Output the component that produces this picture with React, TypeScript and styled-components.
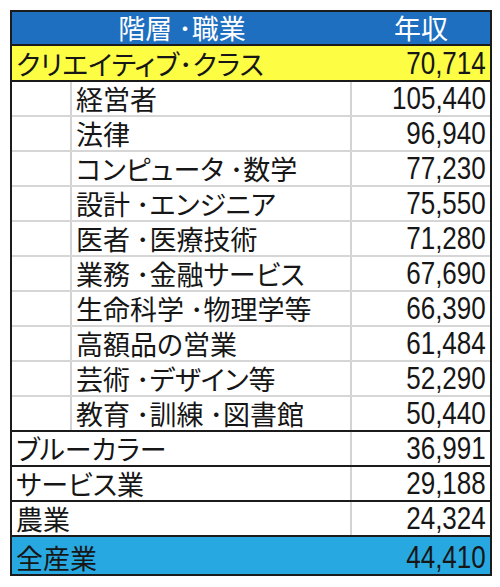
import React from "react";
import styled, { createGlobalStyle } from "styled-components";

const Global = createGlobalStyle`
  html, body { margin: 0; padding: 0; background: #ffffff; }
  body { font-family: "Noto Sans CJK JP", "Noto Sans", sans-serif; color: #161616; }
`;

const JP = `"Noto Sans CJK JP", "Noto Sans", sans-serif`;
const NUM = `"Liberation Sans", Arial, sans-serif`;

const Page = styled.div`
  padding: 10px 8px 10px 10px;
`;

const Sheet = styled.div`
  width: 482px;
  box-sizing: border-box;
  border: 2px solid #1b1b1b;
  display: flex;
  flex-direction: column;
`;

const HeaderRow = styled.div`
  display: grid;
  grid-template-columns: 340px 1fr;
  height: 32px;
  background: #1f6fc0;
  color: #ffffff;
  border-bottom: 2px solid #1b1b1b;
  font-family: ${JP};
  font-size: 27px;
  line-height: 32px;
`;

const HeaderCell = styled.div`
  text-align: center;
  white-space: pre;
`;

type Tone = "plain" | "yellow" | "blue";

const bg = (t: Tone) => (t === "yellow" ? "#fdfd44" : t === "blue" ? "#28a8e0" : "#ffffff");

const Row = styled.div<{ $tone: Tone; $h: number; $line: "dark" | "light" | "none"; $split: boolean }>`
  display: grid;
  grid-template-columns: 340px 1fr;
  height: ${(p) => p.$h}px;
  background: ${(p) => bg(p.$tone)};
  border-bottom: ${(p) =>
    p.$line === "dark" ? "2px solid #1b1b1b" : p.$line === "light" ? "2px solid #d6d6d6" : "none"};
  & > *:first-child {
    border-right: ${(p) => (p.$split ? "2px solid #d3d3d3" : "none")};
  }
`;

const LabelCell = styled.div`
  display: flex;
  align-items: flex-end;
  padding-left: 4px;
  padding-bottom: 1px;
  font-family: ${JP};
  font-size: 27px;
  line-height: 30px;
  font-feature-settings: "palt";
  white-space: pre;
  box-sizing: border-box;
`;

const SubLabelCell = styled.div`
  display: grid;
  grid-template-columns: 60px 1fr;
  box-sizing: border-box;
`;

const Indent = styled.div`
  border-right: 2px solid #d3d3d3;
`;

const SubText = styled.div`
  display: flex;
  align-items: flex-end;
  padding-left: 4px;
  padding-bottom: 1px;
  font-family: ${JP};
  font-size: 27px;
  line-height: 30px;
  font-feature-settings: "palt";
  white-space: pre;
`;

const ValueCell = styled.div`
  display: flex;
  align-items: flex-end;
  justify-content: flex-end;
  padding-right: 4px;
  padding-bottom: 1px;
  font-family: ${NUM};
  font-size: 31px;
  line-height: 30px;
`;

const Num = styled.span`
  display: inline-block;
  transform: scaleX(0.84);
  transform-origin: right bottom;
`;

const subs: [string, string][] = [
  ["経営者", "105,440"],
  ["法律", "96,940"],
  ["コンピュータ ･数学", "77,230"],
  ["設計 ･エンジニア", "75,550"],
  ["医者 ･医療技術", "71,280"],
  ["業務 ･金融サービス", "67,690"],
  ["生命科学 ･物理学等", "66,390"],
  ["高額品の営業", "61,484"],
  ["芸術 ･デザイン等", "52,290"],
  ["教育 ･訓練 ･図書館", "50,440"],
];

const tops: [string, string][] = [
  ["ブルーカラー", "36,991"],
  ["サービス業", "29,188"],
  ["農業", "24,324"],
];

export default function App() {
  return (
    <Page>
      <Global />
      <Sheet>
        <HeaderRow>
          <HeaderCell>階層 ･職業</HeaderCell>
          <HeaderCell>年収</HeaderCell>
        </HeaderRow>
        <Row $tone="yellow" $h={34} $line="dark" $split={false}>
          <LabelCell>クリエイティブ･クラス</LabelCell>
          <ValueCell>
            <Num>70,714</Num>
          </ValueCell>
        </Row>
        {subs.map(([l, v], i) => (
          <Row key={l} $tone="plain" $h={33} $line={i === subs.length - 1 ? "dark" : "light"} $split>
            <SubLabelCell>
              <Indent />
              <SubText>{l}</SubText>
            </SubLabelCell>
            <ValueCell>
              <Num>{v}</Num>
            </ValueCell>
          </Row>
        ))}
        {tops.map(([l, v]) => (
          <Row key={l} $tone="plain" $h={33} $line="dark" $split>
            <LabelCell>{l}</LabelCell>
            <ValueCell>
              <Num>{v}</Num>
            </ValueCell>
          </Row>
        ))}
        <Row $tone="blue" $h={37} $line="none" $split={false}>
          <LabelCell>全産業</LabelCell>
          <ValueCell>
            <Num>44,410</Num>
          </ValueCell>
        </Row>
      </Sheet>
    </Page>
  );
}
